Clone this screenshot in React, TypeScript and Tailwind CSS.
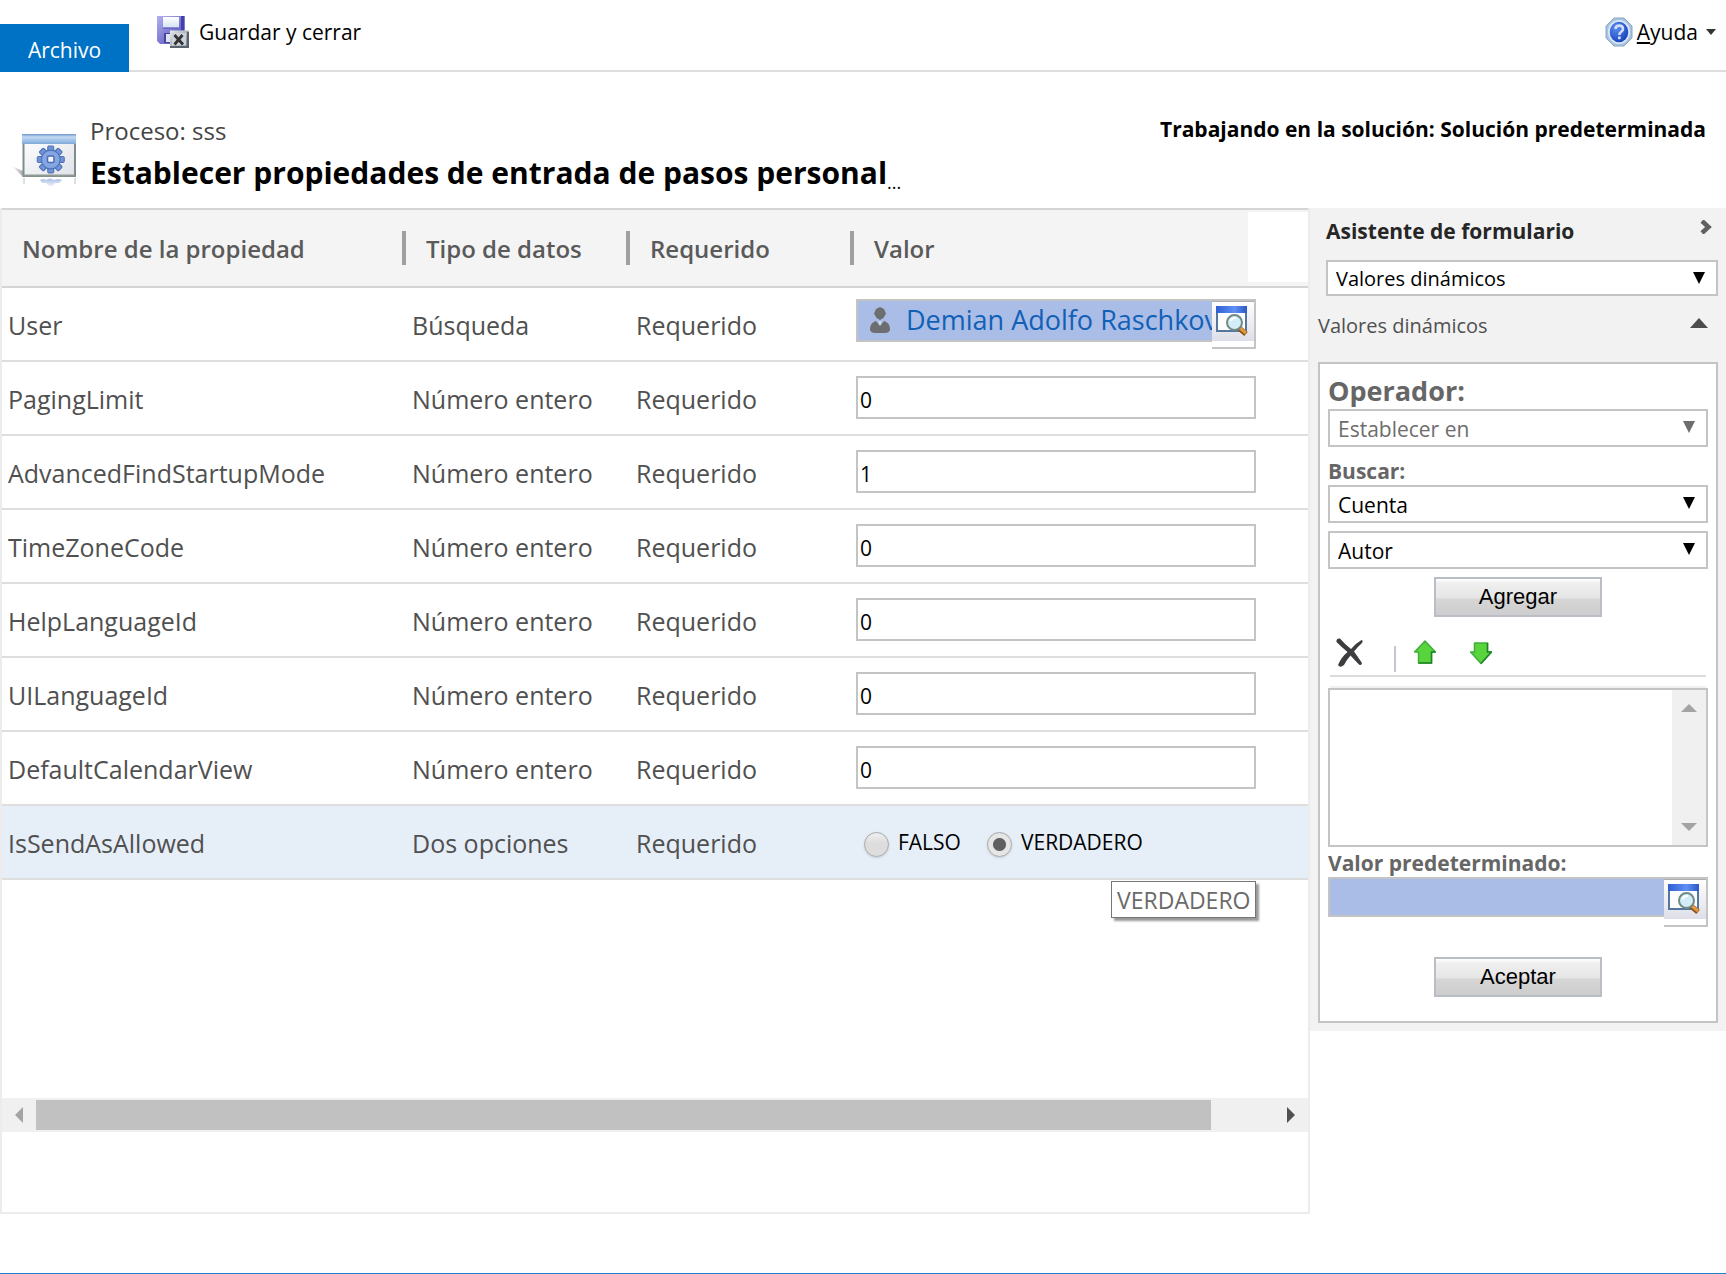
import React, { useId, useState } from "react";

type Row = { name: string; type: string; value: string; kind: "lookup" | "number" | "boolean" };

const rows: Row[] = [
  { name: "User", type: "Búsqueda", value: "Demian Adolfo Raschkov", kind: "lookup" },
  { name: "PagingLimit", type: "Número entero", value: "0", kind: "number" },
  { name: "AdvancedFindStartupMode", type: "Número entero", value: "1", kind: "number" },
  { name: "TimeZoneCode", type: "Número entero", value: "0", kind: "number" },
  { name: "HelpLanguageId", type: "Número entero", value: "0", kind: "number" },
  { name: "UILanguageId", type: "Número entero", value: "0", kind: "number" },
  { name: "DefaultCalendarView", type: "Número entero", value: "0", kind: "number" },
  { name: "IsSendAsAllowed", type: "Dos opciones", value: "VERDADERO", kind: "boolean" },
];

function SaveCloseIcon() {
  return (
    <svg viewBox="0 0 32 32" className="size-8" aria-hidden="true">
      <defs>
        <linearGradient id="disk" x1="0" y1="0" x2="1" y2="1">
          <stop offset="0" stopColor="#b3b0f0" />
          <stop offset="1" stopColor="#4a49b4" />
        </linearGradient>
        <linearGradient id="tag" x1="0" y1="0" x2="1" y2="1">
          <stop offset="0" stopColor="#e8ecf0" />
          <stop offset="1" stopColor="#6b7580" />
        </linearGradient>
        <linearGradient id="label" x1="0" y1="0" x2="0" y2="1">
          <stop offset="0" stopColor="#ffffff" />
          <stop offset="1" stopColor="#d5e4f4" />
        </linearGradient>
      </defs>
      <path d="M0 0H27.500V28H3L0 25Z" fill="url(#disk)" />
      <path d="M24 0H27.500V14H24Z" fill="#4340ad" />
      <rect x="6" y="1" width="16" height="10.500" fill="url(#label)" />
      <path d="M6 11.500H22V13H6Z" fill="#6866c4" />
      <path d="M7 17H14V27H7Z" fill="#45479c" />
      <path d="M9 18H14V26H9Z" fill="#dfe3f2" />
      <rect x="13" y="14.500" width="19" height="17.500" fill="url(#tag)" />
      <path d="M13 31H31V16" fill="none" stroke="#59636d" strokeWidth="2" />
      <rect x="15" y="17" width="14" height="12.500" fill="#cdd3d9" />
      <path d="M17.500 19L26 28.500M25.500 19L17.500 28.500" stroke="#333333" strokeWidth="2.800" />
    </svg>
  );
}

function HelpIcon() {
  return (
    <svg viewBox="0 0 28 30" className="h-[30px] w-7" aria-hidden="true">
      <defs>
        <radialGradient id="help" cx=".35" cy=".3" r=".8">
          <stop offset="0" stopColor="#5c8df2" />
          <stop offset="1" stopColor="#123dbb" />
        </radialGradient>
      </defs>
      <path d="M9 1H19L27 9V21L19 29H9L1 21V9Z" fill="#a9c2de" stroke="#87a7c8" />
      <ellipse cx="14" cy="15" rx="11" ry="12" fill="#dce8f6" />
      <ellipse cx="14" cy="15" rx="9.300" ry="10.300" fill="url(#help)" />
      <path d="M10.500 12C10.500 7.500 18 7.500 18 12C18 15 14.300 14.500 14.300 18" fill="none" stroke="#d3dffa" strokeWidth="2.600" />
      <rect x="13" y="19.500" width="2.700" height="2.700" fill="#d3dffa" />
    </svg>
  );
}

function ProcessIcon() {
  const teeth = [0, 45, 90, 135, 180, 225, 270, 315];
  return (
    <svg viewBox="0 0 64 54" className="h-[54px] w-16" aria-hidden="true">
      <defs>
        <linearGradient id="bar" x1="0" y1="0" x2="0" y2="1">
          <stop offset="0" stopColor="#6f98cb" />
          <stop offset=".3" stopColor="#c3daf3" />
          <stop offset="1" stopColor="#7eaad9" />
        </linearGradient>
        <linearGradient id="pane" x1="0" y1="0" x2="1" y2="1">
          <stop offset="0" stopColor="#ffffff" />
          <stop offset="1" stopColor="#dfe2e8" />
        </linearGradient>
        <linearGradient id="shade" x1="0" y1="0" x2="1" y2="0">
          <stop offset="0" stopColor="#ffffff" />
          <stop offset="1" stopColor="#a8a8a8" />
        </linearGradient>
        <linearGradient id="mirror" x1="0" y1="0" x2="0" y2="1">
          <stop offset="0" stopColor="#a9bde4" />
          <stop offset="1" stopColor="#eef2fa" />
        </linearGradient>
      </defs>
      <path d="M0 32L11 37V43Z" fill="url(#shade)" />
      <rect x="11.500" y="1" width="51.500" height="41" fill="url(#pane)" stroke="#7f8b8c" strokeWidth="2" />
      <rect x="10" y="0" width="54" height="10" fill="url(#bar)" />
      <path d="M11 41.500H63" stroke="#8f9a92" strokeWidth="2" />
      <g fill="#6f93d6" stroke="#4a6db4" strokeWidth="1">
        {teeth.map((a) => (
          <rect key={a} x="35.750" y="12" width="6" height="7" rx="1" transform={`rotate(${a} 38.750 25.500)`} />
        ))}
        <circle cx="38.750" cy="25.500" r="9.500" />
      </g>
      <circle cx="38.750" cy="25.500" r="8.600" fill="#86a6e2" />
      <rect x="35.500" y="22" width="6.500" height="6.500" rx="1.500" fill="#f3f5fa" stroke="#4a6db4" strokeWidth="1.500" />
      <path d="M28 46Q31 44 34 46Q38 43 42 46Q46 44 50 46L47 49L43 49L41 52H37L34 49L30 49Z" fill="url(#mirror)" />
      <path d="M12 44V50M63 44V50" stroke="#dde0e0" strokeWidth="2" />
    </svg>
  );
}

function PersonIcon() {
  return (
    <svg viewBox="0 0 20 26" className="h-[26px] w-5 shrink-0" fill="#6d6e70" aria-hidden="true">
      <path d="M10 0L14 2L16 6.500L13.500 11L10 13L6.500 11L4 6.500L6 2Z" />
      <path d="M6 14L10 19L14 14C18 15 20 18 20 23Q19 26 15 26H5Q1 26 0 23C0 18 2 15 6 14Z" />
      <path d="M8.500 14.500H11.500L10 19Z" fill="#d6def0" />
    </svg>
  );
}

function LookupIcon() {
  return (
    <svg viewBox="0 0 32 31" className="h-[31px] w-8" aria-hidden="true">
      <defs>
        <linearGradient id="win" x1="0" y1="0" x2="1" y2="0">
          <stop offset="0" stopColor="#2f5fd0" />
          <stop offset=".6" stopColor="#5f90f5" />
          <stop offset="1" stopColor="#2b57c4" />
        </linearGradient>
      </defs>
      <rect x="1" y="1" width="29" height="24" fill="#fdfdff" stroke="#54779f" strokeWidth="2" />
      <rect x="0" y="0" width="31" height="7" fill="url(#win)" />
      <path d="M23 22L30 28" stroke="#8a561d" strokeWidth="5.500" />
      <path d="M24 22L30 27" stroke="#e39a3c" strokeWidth="3" />
      <circle cx="18.500" cy="16.500" r="7.500" fill="#d4ecf8" stroke="#6f8b84" strokeWidth="2" />
      <path d="M14.500 15Q16 11.500 20 12" fill="none" stroke="#ffffff" strokeWidth="2" />
    </svg>
  );
}

function LookupButton() {
  return (
    <button
      type="button"
      aria-label="Buscar registro"
      className="absolute -top-0.5 -right-0.5 flex h-[50px] w-11 items-start border-y-2 border-r-2 border-[#c4c4c4] bg-white"
    >
      <span className="flex h-10 grow items-start border-t border-[#b0b0b0] bg-linear-to-b from-white to-[#dedee8] pt-1 pl-1">
        <LookupIcon />
      </span>
    </button>
  );
}

function Select({ label, value, disabled, tall }: { label: string; value: string; disabled?: boolean; tall?: boolean }) {
  return (
    <div className="relative">
      <select
        aria-label={label}
        defaultValue={value}
        disabled={disabled}
        className={`block w-full appearance-none rounded-none border-2 border-[#c4c4c4] bg-white pt-0.5 pl-2 leading-7 opacity-100 ${
          tall ? "h-[38px] text-[21px]" : "h-9 text-[20px]"
        } ${disabled ? "text-[#6d6d6d]" : "text-black"}`}
      >
        <option>{value}</option>
      </select>
      <svg
        viewBox="0 0 12 12"
        className={`pointer-events-none absolute top-3 right-[13px] size-3 ${disabled ? "text-[#6d6d6d]" : "text-black"}`}
        aria-hidden="true"
      >
        <path d="M0 0H12L6 12Z" fill="currentColor" />
      </svg>
    </div>
  );
}

function PushButton({ children }: { children: React.ReactNode }) {
  return (
    <button
      type="button"
      className="mx-auto block h-10 w-[168px] border-2 border-[#b9bec4] bg-[linear-gradient(#ffffff,#efefef_12%,#e6e6e6_52%,#d6d6d6_56%,#cdcdcd)] font-['Liberation_Sans',Arial,sans-serif] text-[22px] leading-7 text-black"
    >
      {children}
    </button>
  );
}

function Radio({ label, name, checked, onChange }: { label: string; name: string; checked: boolean; onChange: () => void }) {
  const id = useId();
  return (
    <div className="flex items-center gap-[9px]">
      <input
        id={id}
        type="radio"
        name={name}
        checked={checked}
        onChange={onChange}
        className="mt-1 size-[25px] appearance-none rounded-full border border-[#a8a8a8] bg-[linear-gradient(#f0f0f0,#dcdcdc_45%,#dedede)] shadow-sm checked:bg-[radial-gradient(circle,#606060_6px,#e6e6e6_7px)]"
      />
      <label htmlFor={id} className="text-[21px] leading-7 text-black">
        {label}
      </label>
    </div>
  );
}

function ValueCell({ row }: { row: Row }) {
  const [flag, setFlag] = useState(row.value === "VERDADERO");
  if (row.kind === "lookup") {
    return (
      <div className="relative mr-[52px] mb-2 flex h-[43px] items-center border-2 border-[#c4c4c4] bg-[#aabde6] pr-[42px] pl-3">
        <PersonIcon />
        <a href="#user" className="ml-4 overflow-hidden text-[27px] leading-9 whitespace-nowrap text-[#1160b7]">
          {row.value}
        </a>
        <LookupButton />
      </div>
    );
  }
  if (row.kind === "number") {
    return (
      <div className="mr-[52px] mb-0.5">
        <input
          aria-label={row.name}
          defaultValue={row.value}
          className="block h-[43px] w-full border-2 border-[#c4c4c4] bg-white pt-1.5 pl-0.5 text-[21px] leading-7 text-black"
        />
      </div>
    );
  }
  return (
    <div className="relative flex gap-[26px] pl-2">
      <Radio label="FALSO" name={row.name} checked={!flag} onChange={() => setFlag(false)} />
      <Radio label="VERDADERO" name={row.name} checked={flag} onChange={() => setFlag(true)} />
      <div
        role="tooltip"
        className="absolute top-[53px] left-[255px] border border-[#767676] bg-white px-[5px] pt-0.5 text-[23px] leading-[33px] text-[#6a6a6a] shadow-[3px_3px_2px_#9a9a9a]"
      >
        VERDADERO
      </div>
    </div>
  );
}

const headCell = "h-20 border-y-2 border-[#d4d4d4] bg-[#f4f4f4] p-0 text-left text-[24px] leading-8 font-semibold text-[#5a5a5a]";

function Head({ children, divider, blank }: { children: React.ReactNode; divider?: boolean; blank?: boolean }) {
  return (
    <th scope="col" className={headCell}>
      <div className="flex h-[76px] items-center justify-between pl-5">
        <span className="pt-0.5">{children}</span>
        {divider && <span className="h-[34px] w-1 bg-[#a0a0a0]" />}
        {blank && <span className="mb-0.5 h-[70px] w-15 bg-white" />}
      </div>
    </th>
  );
}

function PropertyTable() {
  return (
    <table className="w-full table-fixed border-separate border-spacing-0">
      <colgroup>
        <col className="w-[404px]" />
        <col className="w-[224px]" />
        <col className="w-[224px]" />
        <col />
      </colgroup>
      <thead>
        <tr>
          <Head divider>Nombre de la propiedad</Head>
          <Head divider>Tipo de datos</Head>
          <Head divider>Requerido</Head>
          <Head blank>Valor</Head>
        </tr>
      </thead>
      <tbody className="text-[25px] leading-8 text-[#505050]">
        {rows.map((row) => {
          const cell = `h-[74px] border-b-2 border-[#dedede] pr-0 pb-0 ${row.kind === "boolean" ? "bg-[#e6eef8]" : ""}`;
          return (
            <tr key={row.name}>
              <td className={`${cell} pt-0.5 pl-1.5`}>{row.name}</td>
              <td className={`${cell} pt-0.5 pl-1.5`}>{row.type}</td>
              <td className={`${cell} pt-0.5 pl-1.5`}>Requerido</td>
              <td className={`${cell} pt-0 pl-0.5`}>
                <ValueCell row={row} />
              </td>
            </tr>
          );
        })}
      </tbody>
    </table>
  );
}

function HorizontalScrollbar() {
  return (
    <div className="flex h-[34px] items-center bg-[#f0f0f0] py-0.5">
      <button type="button" aria-label="Desplazar a la izquierda" className="flex h-full w-[34px] items-center justify-center">
        <svg viewBox="0 0 8 16" className="h-4 w-2" aria-hidden="true">
          <path d="M8 0V16L0 8Z" fill="#a3a3a3" />
        </svg>
      </button>
      <div className="h-full grow bg-[#c1c1c1]" />
      <div className="w-[63px]" />
      <button type="button" aria-label="Desplazar a la derecha" className="flex h-full w-[34px] items-center justify-center">
        <svg viewBox="0 0 8 16" className="h-4 w-2" aria-hidden="true">
          <path d="M0 0V16L8 8Z" fill="#505050" />
        </svg>
      </button>
    </div>
  );
}

function ArrowIcon({ down }: { down?: boolean }) {
  return (
    <svg viewBox="0 0 22 24" className="h-6 w-[22px]" aria-hidden="true">
      <path
        d={down ? "M4.500 2H17.500V11H21.500L11 22.500L0.500 11H4.500Z" : "M11 1L21.500 12H17.500V23H4.500V12H0.500Z"}
        fill="#5ad43c"
        stroke="#3fae3a"
        strokeWidth="1.500"
        strokeLinejoin="round"
      />
      <path
        d={down ? "M17.500 2V11H21.500L11 22.500" : "M21.500 12H17.500V23H4.500"}
        fill="none"
        stroke="#1f8426"
        strokeWidth="1.500"
      />
    </svg>
  );
}

function Assistant() {
  return (
    <aside className="w-[416px] shrink-0 self-start bg-[#f2f2f2] p-2 text-[21px] leading-7">
      <div className="flex items-start justify-between pr-1.5 pl-2">
        <h2 className="pt-px font-bold text-[#262626]">Asistente de formulario</h2>
        <button type="button" aria-label="Contraer asistente" className="mt-1">
          <svg viewBox="0 0 12 14" className="h-3.5 w-3" aria-hidden="true">
            <path d="M2 1L8.500 7L2 13" fill="none" stroke="#606060" strokeWidth="4.500" />
          </svg>
        </button>
      </div>
      <div className="mt-[15px] pl-2">
        <Select label="Tipo de valores" value="Valores dinámicos" />
      </div>
      <button type="button" className="mt-4 flex w-full items-center justify-between pr-2.5 text-[20px] leading-7 text-[#505050]">
        <span>Valores dinámicos</span>
        <svg viewBox="0 0 18 10" className="mb-1.5 h-2.5 w-[18px]" aria-hidden="true">
          <path d="M9 0L18 10H0Z" fill="#4c4c4c" />
        </svg>
      </button>
      <section className="mt-[22px] border-2 border-[#c4c4c4] bg-white px-2 pt-[11px] pb-6">
        <h3 className="text-[27px] leading-[34px] font-bold text-[#666666]">
          <span className="block leading-8">Operador:</span>
        </h3>
        <div className="mt-0.5">
          <Select label="Operador" value="Establecer en" disabled tall />
        </div>
        <h4 className="mt-2.5 font-bold text-[#666666]">Buscar:</h4>
        <Select label="Entidad" value="Cuenta" tall />
        <div className="mt-2">
          <Select label="Campo" value="Autor" tall />
        </div>
        <div className="mt-2">
          <PushButton>Agregar</PushButton>
        </div>
        <div className="mx-0.5 mt-5 flex h-10 items-start border-b-2 border-[#dcdcdc] pl-1.5">
          <button type="button" aria-label="Quitar">
            <svg viewBox="0 0 28 30" className="h-[30px] w-7" aria-hidden="true">
              <path
                d="M0.500 5Q0 1 4 1.500Q9 7.500 15 12Q19.500 6.500 25.500 3Q27.500 3.500 26 6Q21.500 10 18 14.500Q22 20 26 26Q25.500 29 23 27.500Q18.500 23 14.500 18.500Q10.500 23 8 28Q4 31.500 2 28Q5 20.500 11.500 15Q5.500 10 0.500 5Z"
                fill="#3d3d40"
              />
            </svg>
          </button>
          <span className="mt-[9px] ml-[30px] h-[26px] w-0.5 bg-[#c3c8d0]" />
          <button type="button" aria-label="Subir" className="mt-[3px] ml-[18px]">
            <ArrowIcon />
          </button>
          <button type="button" aria-label="Bajar" className="mt-1 ml-[34px]">
            <ArrowIcon down />
          </button>
        </div>
        <div className="mx-0.5 mt-[9px] h-0.5 bg-[#f0f0f0]" />
        <div className="flex h-[159px] border-2 border-[#c4c4c4]">
          <ul aria-label="Valores seleccionados" className="grow" />
          <div className="flex w-[34px] flex-col items-center justify-between bg-[#f0f0f0] py-3.5">
            <svg viewBox="0 0 16 8" className="h-2 w-4" aria-hidden="true">
              <path d="M8 0L16 8H0Z" fill="#a3a3a3" />
            </svg>
            <svg viewBox="0 0 16 8" className="h-2 w-4" aria-hidden="true">
              <path d="M8 8L16 0H0Z" fill="#a3a3a3" />
            </svg>
          </div>
        </div>
        <label htmlFor="default-value" className="mt-0.5 block font-bold text-[#666666]">
          Valor predeterminado:
        </label>
        <div className="relative h-10 border-2 border-[#c4c4c4] bg-[#aabde6]">
          <input id="default-value" className="block h-full w-full pr-11" />
          <LookupButton />
        </div>
        <div className="mt-10">
          <PushButton>Aceptar</PushButton>
        </div>
      </section>
    </aside>
  );
}

export default function App() {
  return (
    <div className="flex min-h-screen flex-col border-b border-[#2080d0] bg-white font-['Open_Sans','Noto_Sans',sans-serif]">
      <header className="flex h-[72px] items-stretch text-[21px] leading-7">
        <button type="button" className="mt-6 w-[129px] bg-[#0072c6] pt-1 text-white">
          Archivo
        </button>
        <div className="flex grow items-start justify-between border-b-2 border-[#dedede] pt-4 pr-2.5 pl-7">
          <button type="button" className="flex items-center gap-2.5 text-black">
            <SaveCloseIcon />
            Guardar y cerrar
          </button>
          <button type="button" className="flex items-center pt-px text-black">
            <HelpIcon />
            <span className="ml-1">
              <span className="underline underline-offset-2">A</span>yuda
            </span>
            <svg viewBox="0 0 10 6" className="ml-2 h-1.5 w-2.5" aria-hidden="true">
              <path d="M0 0H10L5 6Z" fill="#333333" />
            </svg>
          </button>
        </div>
      </header>

      <div className="flex h-[136px] items-start justify-between pr-5 pl-3">
        <div className="flex">
          <div className="mt-[62px]">
            <ProcessIcon />
          </div>
          <div className="mt-[41px] ml-3.5">
            <p className="text-[24px] leading-9 text-[#444444]">Proceso: sss</p>
            <div className="mt-[3px] flex items-end">
              <h1 className="text-[30px] leading-[42px] font-bold text-black">Establecer propiedades de entrada de pasos personal</h1>
              <span className="text-[18px] leading-6 text-black">...</span>
            </div>
          </div>
        </div>
        <p className="mt-[43px] text-[21px] leading-7 font-bold text-black">Trabajando en la solución: Solución predeterminada</p>
      </div>

      <main className="flex grow items-stretch">
        <div className="mb-[59px] flex min-w-0 grow flex-col border-x-2 border-b-2 border-[#ececec] pb-20">
          <div className="grow">
            <PropertyTable />
          </div>
          <HorizontalScrollbar />
        </div>
        <Assistant />
      </main>
    </div>
  );
}
